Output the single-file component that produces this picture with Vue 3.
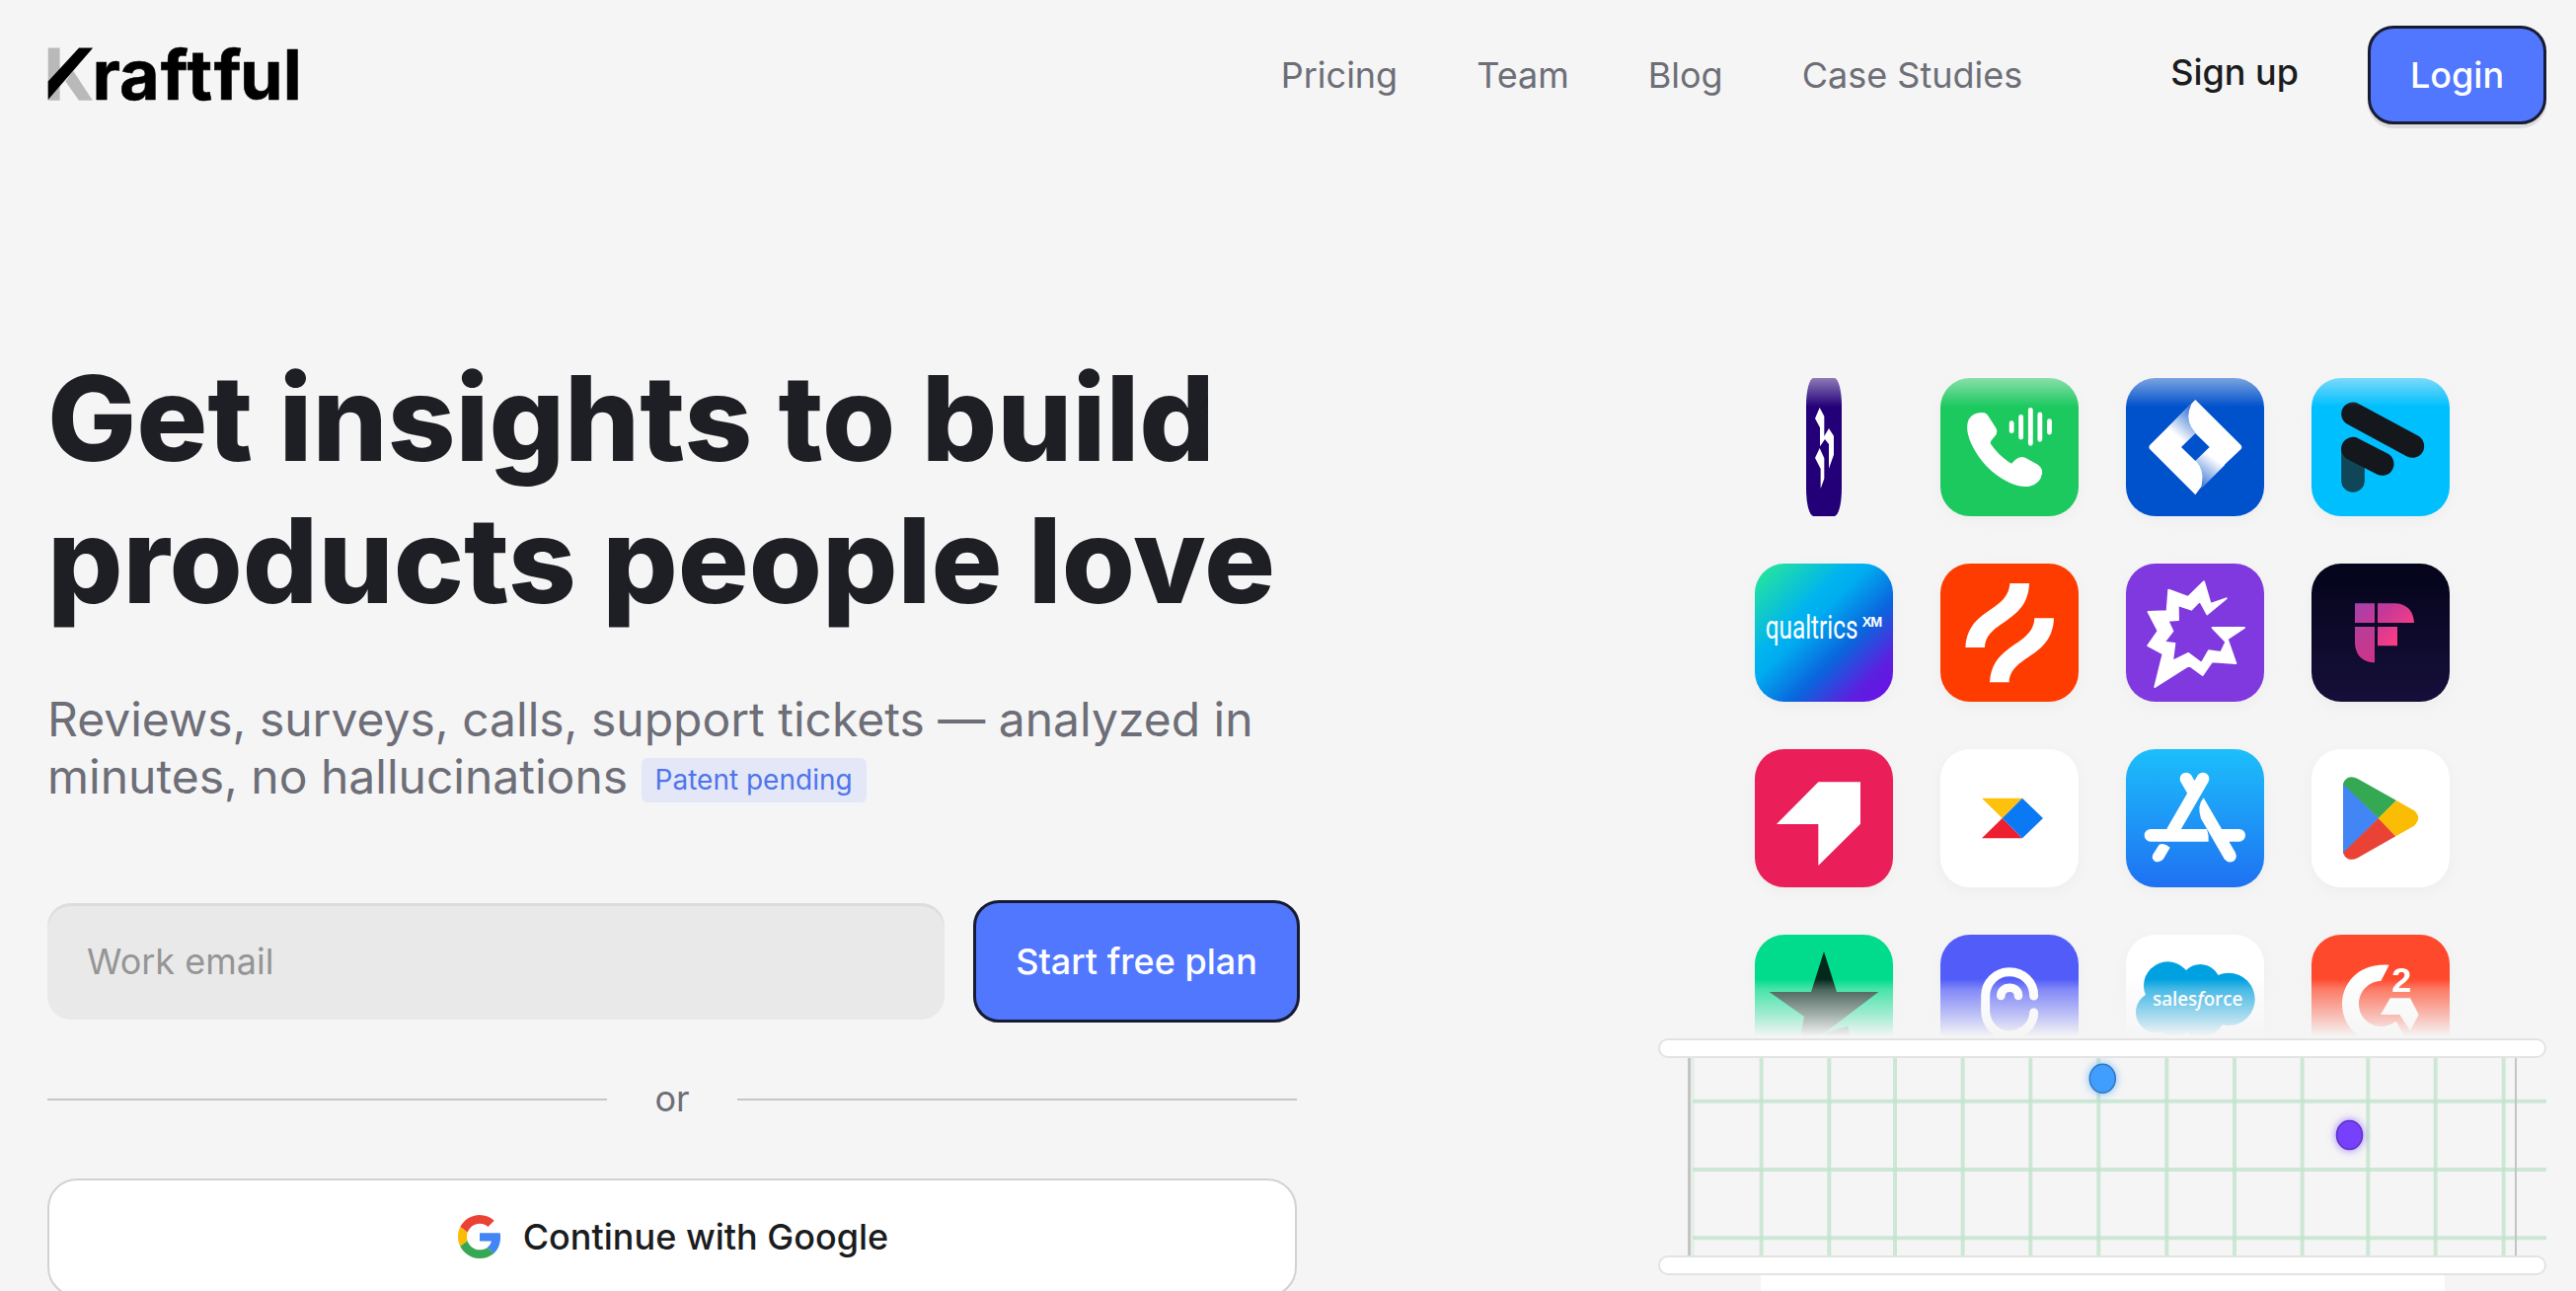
<script setup>
const links = ['Pricing', 'Team', 'Blog', 'Case Studies']
const gridX = [1715, 1784.7, 1853.3, 1920, 1988.7, 2057.3, 2126.3, 2195.3, 2264, 2332.7, 2399.3, 2467.7, 2536.7]
const gridY = [1115.7, 1185, 1254.3]
</script>

<template>
  <div class="page">
    <header class="nav">
      <svg class="logo" width="258" height="60" viewBox="0 0 258 60">
        <path d="M.7 4.500H12.600V57.700H.7ZM18.300 38.500 26 27.500 45.800 57.700H32Z" fill="#b9b9b9" />
        <path d="M32 4.500H46.200L.7 57V38.500Z" fill="#000" />
        <text x="45.500 73 114.700 141.500 168.700 195 238.800" y="57.300" class="wordmark">raftful</text>
      </svg>
      <nav class="links">
        <a v-for="l in links" :key="l">{{ l }}</a>
      </nav>
      <a class="signup">Sign up</a>
      <button class="btn login">Login</button>
    </header>

    <main class="hero">
      <section class="copy">
        <h1>Get insights to build<br />products people love</h1>
        <p class="lead">
          Reviews, surveys, calls, support tickets — analyzed in<br />minutes, no hallucinations
          <span class="pill">Patent pending</span>
        </p>
        <div class="form">
          <div class="input">Work email</div>
          <button class="btn start">Start free plan</button>
        </div>
        <div class="or"><i></i><span>or</span><i></i></div>
        <button class="google">
          <svg width="44" height="44" viewBox="0 0 48 48">
            <path fill="#EA4335" d="M24 9.5c3.54 0 6.71 1.22 9.21 3.6l6.85-6.85C35.9 2.38 30.47 0 24 0 14.62 0 6.51 5.38 2.56 13.22l7.98 6.19C12.43 13.72 17.74 9.5 24 9.5z" />
            <path fill="#4285F4" d="M46.98 24.55c0-1.57-.15-3.09-.38-4.55H24v9.02h12.94c-.58 2.96-2.26 5.48-4.78 7.18l7.73 6c4.51-4.18 7.09-10.36 7.09-17.65z" />
            <path fill="#FBBC05" d="M10.53 28.59c-.48-1.45-.76-2.99-.76-4.59s.27-3.14.76-4.59l-7.98-6.19C.92 16.46 0 20.12 0 24c0 3.88.92 7.54 2.56 10.78l7.97-6.19z" />
            <path fill="#34A853" d="M24 48c6.48 0 11.93-2.13 15.89-5.81l-7.73-6c-2.15 1.45-4.92 2.3-8.16 2.3-6.26 0-11.57-4.22-13.47-9.91l-7.98 6.19C6.51 42.62 14.62 48 24 48z" />
          </svg>
          <span>Continue with Google</span>
        </button>
      </section>

      <section class="visual">
        <div class="tiles">
          <!-- flipping tile -->
          <svg class="flip" viewBox="54 39 420 420">
            <rect x="210" y="39" width="108" height="420" rx="22" ry="84" fill="#240078" />
            <path d="M251 129 265 155V216L279 192 294 215V272L279 314V240L267 225 252 247V190L237 162ZM251 252 265 283V345L254 375V315L237 282Z" fill="#fff" />
          </svg>
          <!-- phone -->
          <svg viewBox="618 39 420 420" style="background: #1cc95f">
            <path d="M704 165 Q720 140 752 145 Q760 148 766 158L787 191 Q794 205 784 215L773 229 Q768 235 772 241 Q798 278 834 299L846 287 Q860 275 876 281L914 302 Q930 314 927 330 Q922 360 889 368 Q862 373 828 357 Q750 320 711 237 Q692 193 704 165Z" fill="#fff" />
            <path d="M834.500 176V200M863 157V219M892 136V238M920.500 150V226M949.500 170V204" stroke="#fff" stroke-width="14.500" stroke-linecap="round" />
          </svg>
          <!-- jira -->
          <svg viewBox="72 39 420 420" style="background: #0052cc">
            <defs>
              <linearGradient id="ja" x1="275" y1="135" x2="215" y2="205" gradientUnits="userSpaceOnUse"><stop offset="0" stop-color="#3c78d6" /><stop offset="1" stop-color="#fff" /></linearGradient>
              <linearGradient id="jb" x1="295" y1="365" x2="350" y2="290" gradientUnits="userSpaceOnUse"><stop offset="0" stop-color="#3c78d6" /><stop offset="1" stop-color="#fff" /></linearGradient>
            </defs>
            <path d="M283 105 145 242Q139 249 145 256L283 394 302 368 421 256Q427 249 421 242Z" fill="#fff" />
            <path d="M272 116 200 188 240 248 284 206Q255 175 264 137Z" fill="url(#ja)" />
            <path d="M301 375 372 304 326 249 284 290Q310 318 303 356Z" fill="url(#jb)" />
            <path d="M283 207 326 249 283 291 240 249Z" fill="#0052cc" />
          </svg>
          <!-- slanted F -->
          <svg viewBox="636 39 420 420" style="background: #00bfff">
            <path d="M762 255V351" stroke="#0f4658" stroke-width="71" stroke-linecap="round" />
            <path d="M762 148 943 246M762 254 851 300" stroke="#14171b" stroke-width="71" stroke-linecap="round" />
          </svg>
          <!-- qualtrics -->
          <svg viewBox="54 603 420 420" style="background: linear-gradient(135deg, #26e59c 4%, #00b4ee 34%, #00adf0 42%, #0a66dd 63%, #5c20e0 83%, #6d0ee8)">
            <text transform="translate(86 832) scale(.745 1)" class="qual">qualtrics</text>
            <text x="380" y="795" class="xm">XM</text>
          </svg>
          <!-- hotjar -->
          <svg viewBox="618 603 420 420" style="background: #ff3c00">
            <path d="M829 663H888C884 785 757 775 753 858H694C700 738 825 750 829 663Z" fill="#fff" />
            <path d="M904 769H963C959 891 831 881 827 964H768C774 844 900 856 904 769Z" fill="#fff" />
          </svg>
          <!-- burst -->
          <svg viewBox="72 603 420 420" style="background: #8039df">
            <path d="M309 658 329 726 377 709 319 757 297 716 271 743 230 729 231 774 199 776 214 808 188 842 220 846 213 900 262 876 302 906 324 868 361 873 376 841 335 798 432 798 380 832 406 906 333 901 305 942 264 912 160 978 185 877 139 852 170 808 140 750 197 748 202 683 261 705Z" fill="#fff" stroke="#fff" stroke-width="6" stroke-linejoin="round" />
          </svg>
          <!-- fireflies -->
          <svg viewBox="636 603 420 420" style="background: linear-gradient(#04041a, #160f3a)">
            <defs>
              <linearGradient id="ff" x1="768" y1="724" x2="880" y2="850" gradientUnits="userSpaceOnUse"><stop offset="0" stop-color="#a044ac" /><stop offset=".45" stop-color="#c53898" /><stop offset="1" stop-color="#f73d86" /></linearGradient>
              <linearGradient id="fg" x1="768" y1="795" x2="828" y2="904" gradientUnits="userSpaceOnUse"><stop offset="0" stop-color="#b53e9a" /><stop offset="1" stop-color="#cf3386" /></linearGradient>
            </defs>
            <path d="M768 724H828V783H768ZM837 724H892Q944 728 948 783H837ZM837 795H897V853H837Z" fill="url(#ff)" />
            <path d="M768 795H828V904Q774 902 768 848Z" fill="url(#fg)" />
          </svg>
          <!-- pendo -->
          <svg viewBox="54 57 420 420" style="background: #ea1e58">
            <path d="M247 157H375V284L247 411V285H120Z" fill="#fff" />
          </svg>
          <!-- tricolour arrow -->
          <svg viewBox="618 57 420 420" style="background: #fff">
            <path d="M744 206H867L806 267Z" fill="#fec20e" /><path d="M744 328 806 267 867 328Z" fill="#ec2030" /><path d="M867 206 930 267 867 328 806 267Z" fill="#0b78f4" />
          </svg>
          <!-- app store -->
          <svg viewBox="72 57 420 420" style="background: linear-gradient(#1cbffb, #1f71f2)">
            <path d="M255 147 275 182M306 147 214 306" stroke="#fff" stroke-width="38" stroke-linecap="round" fill="none" />
            <path d="M147 300H318Q325 318 323 338H147A19 19 0 0 1 147 300ZM350 300H416A19 19 0 0 1 416 338H370Z" fill="#fff" />
            <path d="M308 205 405 372Q412 389 398 398 382 405 371 391L300 268Q287 230 308 205Z" fill="#fff" />
            <path d="M173 347Q190 341 206 356L186 391Q176 404 160 398 147 389 155 376Z" fill="#fff" />
          </svg>
          <!-- google play -->
          <svg viewBox="636 57 420 420" style="background: #fff">
            <path d="M732 160V375L841 267Z" fill="#4285f4" />
            <path d="M732 163Q736 150 746 144 760 138 775 146L894 213 840 267Z" fill="#34a853" />
            <path d="M732 372Q736 385 746 390 760 396 776 388L892 322 840 267Z" fill="#ea4335" />
            <path d="M894 213 948 244Q973 266 948 290L892 322 839 267Z" fill="#fbbc04" />
          </svg>
          <!-- star -->
          <svg viewBox="54 621 420 420" style="background: #00dc8c">
            <path d="M264 672 303 795H430L264 921 184 970 204 870 98 795H225Z" fill="#03291c" />
            <path d="M264 921 336 899 362 985Z" fill="#03291c" />
          </svg>
          <!-- canny -->
          <svg viewBox="618 621 420 420" style="background: #525cf8">
            <path d="M902 807C902 764 868 734 828 734S755 766 755 807V852C755 895 790 927 828 927S902 895 902 858" fill="none" stroke="#fff" stroke-width="27" stroke-linecap="round" />
            <path d="M802 807C802 774 855 774 855 807" fill="none" stroke="#fff" stroke-width="26" stroke-linecap="round" />
          </svg>
          <!-- salesforce -->
          <svg viewBox="72 621 420 420" style="background: #fff">
            <g fill="#00a1e0">
              <circle cx="199" cy="776" r="73" /><circle cx="298" cy="772" r="61" /><circle cx="384" cy="817" r="80" /><circle cx="164" cy="857" r="62" /><circle cx="220" cy="865" r="65" /><ellipse cx="300" cy="860" rx="75" ry="70" />
            </g>
            <text x="153" y="838" textLength="274" lengthAdjust="spacingAndGlyphs" class="sf">sales<tspan font-style="italic">f</tspan>orce</text>
          </svg>
          <!-- g2 -->
          <svg viewBox="636 621 420 420" style="background: #ff492c">
            <path d="M872 713 847 762C812 762 780 792 780 832S812 900 847 900Q872 899 893 884L917 927Q885 951 848 951C780 951 729 896 729 832S780 705 872 713Z" fill="#fff" />
            <path d="M875 814H936L962 864 936 913 904 864H846Z" fill="#fff" />
            <text x="880" y="796" textLength="60" lengthAdjust="spacingAndGlyphs" class="two">2</text>
          </svg>
          <div class="fade top"></div>
          <div class="fade bottom"></div>
        </div>
        <div class="bar"></div>
        <svg class="board" width="900" height="200" viewBox="1680 1072 900 200">
          <g stroke="#c3e4cd" stroke-opacity=".8" stroke-width="4">
            <line v-for="(x, i) in gridX" :key="'x' + x" :x1="x" :x2="x" y1="1072" y2="1272" :opacity="i ? 1 : 0.4" />
            <line v-for="y in gridY" :key="'y' + y" x1="1715" x2="2580" :y1="y" :y2="y" />
          </g>
          <path d="M1710 1072h3v200h-3z" fill="#c4c4c4" />
          <path d="M2548 1072h2v200h-2z" fill="#c4c4c4" />
          <ellipse class="dot blue" cx="2130.300" cy="1092.700" rx="13" ry="14.500" />
          <ellipse class="dot violet" cx="2380.500" cy="1150" rx="13" ry="14.500" />
        </svg>
        <div class="bar"></div>
        <div class="sheet"></div>
      </section>
    </main>
  </div>
</template>

<style>
body { background: #f5f5f5; overflow: hidden; }
</style>

<style scoped>
.page { width: 2610px; height: 1308px; overflow: hidden; background: #f5f5f5; font-family: Inter, "Liberation Sans", sans-serif; color: #1b1c20; box-sizing: border-box; }
.nav { display: flex; height: 152px; padding: 0 30px 0 48px; box-sizing: border-box; align-items: center; }
.logo { margin-top: -4px; overflow: visible; }
.wordmark { font: 700 70px Inter, sans-serif; fill: #000; stroke: #000; stroke-width: .6px; }
.links { display: flex; gap: 80px; margin-left: auto; font-size: 36px; color: #6d6e77; }
.signup { font-size: 36px; font-weight: 500; margin: -6px 70px 0 150px; }
.btn { box-sizing: border-box; border: 3px solid #171c33; background: #5177ff; color: #fff; font: 500 36px Inter, sans-serif; padding: 0; border-radius: 26px; white-space: nowrap; }
.login { width: 181px; height: 100px; box-shadow: 0 4px 1px rgba(0, 0, 0, .1); }
.hero { display: flex; justify-content: space-between; padding: 0 30px 0 48px; }
.copy { width: 1270px; padding-top: 200px; }
h1 { margin: 0; font-size: 120px; line-height: 144px; font-weight: 800; color: #1e1f24; white-space: nowrap; }
.lead { height: 116px; margin: 60px 0 0; font-size: 48px; line-height: 58px; color: #6d6e77; white-space: nowrap; }
.pill { display: inline-block; height: 45px; line-height: 45px; padding: 0 14px; font-size: 28px; border-radius: 6px; background: #e3e7f7; color: #4f74ea; vertical-align: 4px; }
.form { display: flex; align-items: center; gap: 29px; margin-top: 96px; }
.input { box-sizing: border-box; width: 909px; height: 118px; border-radius: 24px; background: #e9e9e9; box-shadow: inset 0 3px 1px #dcdcdc; font-size: 36px; line-height: 118px; padding-left: 40px; color: #959595; }
.start { width: 331px; height: 124px; }
.or { display: flex; align-items: center; justify-content: space-between; width: 1266px; height: 44px; margin-top: 56px; font-size: 36px; color: #6d6e77; }
.or span { margin-top: -3px; }
.or i { width: 567px; height: 2px; background: #c6c6c6; }
.google { display: flex; align-items: center; justify-content: center; gap: 22px; width: 1266px; height: 120px; margin-top: 58px; box-sizing: border-box; border: 2px solid #d2d2d2; border-radius: 30px; background: #fff; font: 500 36px Inter, sans-serif; color: #1b1c20; padding: 0 0 3px 2px; }
.visual { width: 900px; padding-top: 231px; display: flex; flex-direction: column; }
.tiles { position: relative; display: grid; grid-template-columns: repeat(4, 140px); grid-auto-rows: 140px; gap: 48px; height: 669px; overflow: hidden; margin: 0 60px 0 58px; padding-left: 40px; }
.tiles > svg { width: 140px; height: 140px; border-radius: 30px; box-shadow: 0 4px 16px rgba(0, 0, 0, .035); }
.tiles > svg.flip { box-shadow: none; }
.fade { position: absolute; left: 0; right: 0; }
.top { top: 0; height: 29px; background: linear-gradient(rgba(245, 245, 245, .5), rgba(245, 245, 245, 0)); }
.bottom { bottom: 0; height: 60px; background: linear-gradient(rgba(245, 245, 245, 0), rgba(245, 245, 245, .3) 18%, rgba(245, 245, 245, .66) 60%, #f5f5f5 97%); }
.bar { box-sizing: border-box; flex: none; height: 20px; border: 2px solid #e3e3e3; border-radius: 10px; background: #fff; }
.board { display: block; flex: none; }
.sheet { width: 693px; height: 40px; margin-left: 104px; background: #fff; }
.dot { stroke-width: 1.5; }
.blue { fill: #409eff; stroke: #3577bf; filter: drop-shadow(0 0 4px rgba(64, 158, 255, .7)); }
.violet { fill: #7740ff; stroke: #5a34bd; filter: drop-shadow(0 0 4px rgba(119, 64, 255, .7)); }
.qual { font: 400 98px Roboto, sans-serif; fill: #fff; }
.xm { font: 700 43px "Liberation Sans", sans-serif; fill: #fff; letter-spacing: -3px; }
.sf { font: 600 60px "Open Sans", sans-serif; fill: #fff; }
.two { font: 700 106px "Liberation Sans", sans-serif; fill: #fff; }
</style>
